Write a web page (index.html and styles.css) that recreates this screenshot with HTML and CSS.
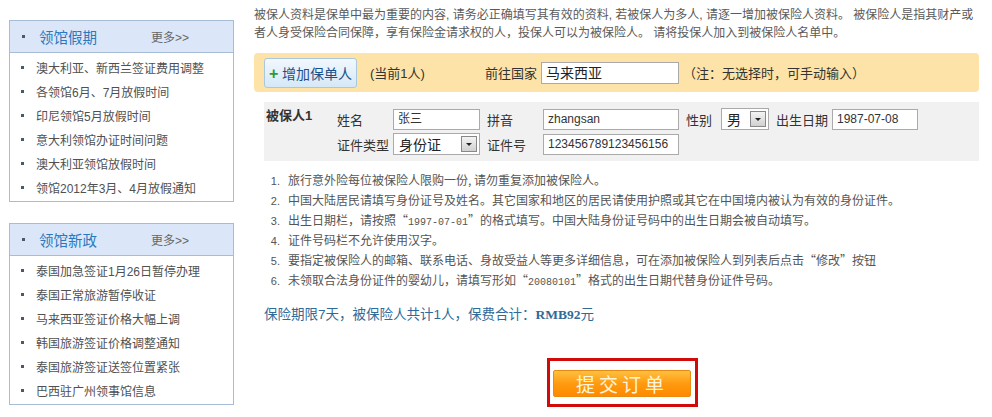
FILE: index.html
```html
<!DOCTYPE html>
<html>
<head>
    <title>填写被保人资料</title>
    <link rel="stylesheet" href="styles.css">
</head>
<body>
    <div class="page">
        <div class="side">
            <div class="box">
                <div class="box-head">
                    <span class="dot"></span>
                    <span class="box-title">领馆假期</span>
                    <a class="more" href="#">更多&gt;&gt;</a>
                </div>
                <ul class="box-list">
                    <li><span class="dot"></span>澳大利亚、新西兰签证费用调整</li>
                    <li><span class="dot"></span>各领馆6月、7月放假时间</li>
                    <li><span class="dot"></span>印尼领馆5月放假时间</li>
                    <li><span class="dot"></span>意大利领馆办证时间问题</li>
                    <li><span class="dot"></span>澳大利亚领馆放假时间</li>
                    <li><span class="dot"></span>领馆2012年3月、4月放假通知</li>
                </ul>
            </div>
            <div class="box">
                <div class="box-head">
                    <span class="dot"></span>
                    <span class="box-title">领馆新政</span>
                    <a class="more" href="#">更多&gt;&gt;</a>
                </div>
                <ul class="box-list">
                    <li><span class="dot"></span>泰国加急签证1月26日暂停办理</li>
                    <li><span class="dot"></span>泰国正常旅游暂停收证</li>
                    <li><span class="dot"></span>马来西亚签证价格大幅上调</li>
                    <li><span class="dot"></span>韩国旅游签证价格调整通知</li>
                    <li><span class="dot"></span>泰国旅游签证送签位置紧张</li>
                    <li><span class="dot"></span>巴西驻广州领事馆信息</li>
                </ul>
            </div>
        </div>

        <div class="main">
            <p class="intro">被保人资料是保单中最为重要的内容, 请务必正确填写其有效的资料, 若被保人为多人, 请逐一增加被保险人资料。 被保险人是指其财产或<br>者人身受保险合同保障，享有保险金请求权的人，投保人可以为被保险人。 请将投保人加入到被保险人名单中。</p>

            <div class="bar">
                <button class="add-btn"><span class="plus">+</span> 增加保单人</button>
                <span class="count">(当前1人)</span>
                <span class="bar-label">前往国家</span>
                <span class="field country">马来西亚</span>
                <span class="note">（注：无选择时，可手动输入）</span>
            </div>

            <div class="person">
                <div class="person-name">被保人1</div>
                <div class="person-rows">
                    <div class="row">
                        <span class="lbl">姓名</span>
                        <span class="field w-name">张三</span>
                        <span class="lbl">拼音</span>
                        <span class="field w-long">zhangsan</span>
                        <span class="lbl short">性别</span>
                        <span class="select w-sex">男<span class="arrow"></span></span>
                        <span class="lbl">出生日期</span>
                        <span class="field w-date">1987-07-08</span>
                    </div>
                    <div class="row">
                        <span class="lbl">证件类型</span>
                        <span class="select w-name">身份证<span class="arrow"></span></span>
                        <span class="lbl">证件号</span>
                        <span class="field w-long">123456789123456156</span>
                    </div>
                </div>
            </div>

            <ol class="notes">
                <li>旅行意外险每位被保险人限购一份, 请勿重复添加被保险人。</li>
                <li>中国大陆居民请填写身份证号及姓名。其它国家和地区的居民请使用护照或其它在中国境内被认为有效的身份证件。</li>
                <li>出生日期栏，请按照“<span class="mono">1997-07-01</span>”的格式填写。中国大陆身份证号码中的出生日期会被自动填写。</li>
                <li>证件号码栏不允许使用汉字。</li>
                <li>要指定被保险人的邮箱、联系电话、身故受益人等更多详细信息，可在添加被保险人到列表后点击“修改”按钮</li>
                <li>未领取合法身份证件的婴幼儿，请填写形如“<span class="mono">20080101</span>”格式的出生日期代替身份证件号码。</li>
            </ol>

            <p class="total">保险期限7天，被保险人共计1人，保费合计：<b>RMB92</b>元</p>

            <div class="submit-wrap">
                <div class="submit-frame">
                    <button class="submit">提交订单</button>
                </div>
            </div>
        </div>
    </div>
</body>
</html>
```

FILE: styles.css
```css
body {
    margin: 0;
    background: #fff;
    font-family: "Liberation Sans", "Noto Sans CJK SC", sans-serif;
    color: #444;
}
.page {
    display: flex;
    width: 992px;
}
.side {
    width: 225px;
    padding: 20px 0 0 9px;
    display: flex;
    flex-direction: column;
    gap: 21px;
}
.box {
    border: 1px solid #a7bdd6;
}
.box-head {
    height: 31px;
    background: #dbe7f8;
    border-bottom: 1px solid #a7bdd6;
    display: flex;
    align-items: center;
    padding-left: 12px;
}
.dot {
    display: inline-block;
    width: 3px;
    height: 3px;
    background: #4a5a6e;
    margin-right: 12px;
    flex-shrink: 0;
}
.box-title {
    font-size: 14.5px;
    color: #2c78bd;
    width: 112px;
    margin-left: 2px;
}
.more {
    font-size: 12px;
    color: #666;
    text-decoration: none;
}
.box-list {
    list-style: none;
    margin: 0;
    padding: 2px 0;
}
.box-list li {
    height: 24px;
    display: flex;
    align-items: center;
    padding-left: 11px;
    font-size: 12px;
    color: #505050;
}

.main {
    width: 725px;
    margin-left: 20px;
}
.intro {
    margin: 6px 0 0;
    font-size: 12px;
    line-height: 18px;
    color: #5a5a5a;
    white-space: nowrap;
}
.bar {
    margin-top: 11px;
    height: 39px;
    background: #fde3a8;
    border-radius: 4px;
    display: flex;
    align-items: center;
    padding-left: 10px;
    font-size: 13px;
    color: #333;
}
.add-btn {
    height: 30px;
    width: 93px;
    padding: 0;
    border: 1px solid #a9c8e0;
    border-radius: 3px;
    background: linear-gradient(#f2f8fd, #d5e8f7);
    color: #1d5088;
    font-size: 14px;
    font-family: "Liberation Sans", "Noto Sans CJK SC", sans-serif;
}
.plus {
    color: #2f9a2f;
    font-weight: bold;
    font-size: 16px;
}
.count {
    width: 115px;
    margin-left: 13px;
}
.bar-label {
    width: 56px;
}
.field {
    display: inline-block;
    box-sizing: border-box;
    height: 21px;
    line-height: 19px;
    border: 1px solid #aaa;
    background: #fff;
    padding-left: 4px;
    font-size: 12px;
    color: #333;
}
.country {
    width: 138px;
    height: 22px;
    line-height: 20px;
    font-size: 14px;
    color: #222;
}
.note {
    margin-left: 4px;
}

.person {
    margin: 10px 0 0 10px;
    background: #f1f1f1;
    display: flex;
    padding: 6px 0 6px 2px;
}
.person-name {
    width: 71px;
    font-size: 13px;
    font-weight: bold;
    color: #333;
    line-height: 16px;
}
.person-rows {
    display: flex;
    flex-direction: column;
    gap: 3px;
}
.row {
    display: flex;
    align-items: center;
    font-size: 13px;
    color: #333;
}
.lbl {
    width: 56px;
    margin-left: 7px;
}
.row .lbl:first-child {
    margin-left: 0;
}
.lbl.short {
    width: 35px;
}
.w-name { width: 87px; }
.w-long { width: 136px; }
.w-date { width: 86px; }
.w-sex { width: 48px; }
.select {
    box-sizing: border-box;
    height: 22px;
    border: 1px solid #aaa;
    background: #fff;
    display: flex;
    align-items: center;
    justify-content: space-between;
    padding: 0 2px 0 5px;
    font-size: 14px;
    color: #222;
}
.arrow {
    width: 14px;
    height: 14px;
    border: 1px solid #888;
    background: linear-gradient(#f4f4f4, #d0d0d0);
    position: relative;
}
.arrow::after {
    content: "";
    position: absolute;
    left: 4px;
    top: 6px;
    border-left: 3px solid transparent;
    border-right: 3px solid transparent;
    border-top: 3px solid #222;
}

.notes {
    margin: 9px 0 0;
    padding-left: 29px;
    font-size: 12px;
    line-height: 20px;
    color: #555;
    font-family: "Noto Sans CJK SC", sans-serif;
}
.notes li {
    padding-left: 5px;
    height: 20px;
}
.notes li::marker {
    font-size: 11px;
    font-family: "Liberation Sans", sans-serif;
}
.mono {
    font-family: "Liberation Mono", monospace;
    font-size: 10px;
    line-height: 10px;
}
.total {
    margin: 13px 0 0 10px;
    font-size: 13.5px;
    color: #2f6a98;
}
.total b {
    font-family: "Liberation Serif", serif;
    font-size: 13.5px;
}
.submit-wrap {
    display: flex;
    padding: 35px 0 0 293px;
}
.submit-frame {
    border: 3px solid #d10a0a;
    padding: 9px 4px 7px 3px;
    background: #fff;
}
.submit {
    display: block;
    width: 138px;
    height: 27px;
    padding: 0;
    border: 1px solid #e98a12;
    border-radius: 2px;
    background: linear-gradient(#ffc040, #ff9a10 50%, #ff8a00);
    color: #fff5d8;
    font-size: 19px;
    letter-spacing: 4px;
    font-family: "Noto Sans CJK SC", sans-serif;
    line-height: 25px;
}
```
